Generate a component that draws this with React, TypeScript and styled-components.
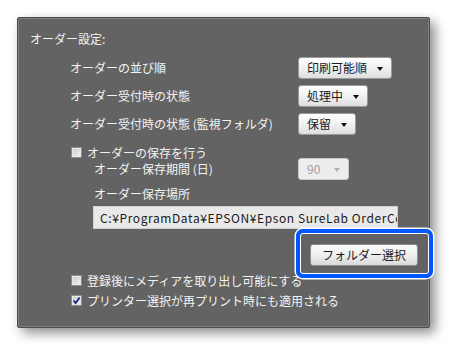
import { FC, PropsWithChildren } from 'react';
import styled, { createGlobalStyle } from 'styled-components';

const GlobalStyle = createGlobalStyle`
  html, body {
    margin: 0;
    padding: 0;
    background: #ffffff;
  }
  body {
    font-family: 'Noto Sans CJK JP', 'Noto Sans', sans-serif;
    font-size: 12px;
  }
`;

const Page = styled.div`
  padding: 17px 0 0 17px;
  width: 455px;
  height: 352px;
  box-sizing: border-box;
`;

const Panel = styled.div`
  position: relative;
  width: 413px;
  height: 311px;
  box-sizing: border-box;
  background: #636363;
  border: 1px solid #4c4c4c;
  border-radius: 2px;
  box-shadow: inset 0 0 0 1px #808080, 5px 5px 12px rgba(0, 0, 0, 0.45);
  padding: 12px 0 0 12px;
  color: #f4f4f4;
  display: flex;
  flex-direction: column;
`;

const Title = styled.div`
  height: 18px;
  line-height: 18px;
  margin-bottom: 9px;
`;

const Rows = styled.div`
  display: grid;
  grid-template-columns: 228px auto;
  row-gap: 6px;
  padding-left: 40px;
`;

const Label = styled.div`
  height: 22px;
  line-height: 22px;
  white-space: nowrap;
`;

const Select = styled.div<{ $width: number; $disabled?: boolean }>`
  width: ${(p) => p.$width}px;
  height: 22px;
  box-sizing: border-box;
  display: flex;
  align-items: center;
  justify-content: space-between;
  padding: 0 8px;
  border: 1px solid ${(p) => (p.$disabled ? '#c8c8c8' : '#9a9a9a')};
  border-radius: 3px;
  background: ${(p) =>
    p.$disabled
      ? '#ededed'
      : 'linear-gradient(#ffffff 0%, #f2f2f2 50%, #dedede 100%)'};
  color: ${(p) => (p.$disabled ? '#a0a0a0' : '#1a1a1a')};
  line-height: 20px;
`;

const Arrow = styled.span<{ $disabled?: boolean }>`
  width: 0;
  height: 0;
  border-left: 3.5px solid transparent;
  border-right: 3.5px solid transparent;
  border-top: 4px solid ${(p) => (p.$disabled ? '#b0b0b0' : '#111')};
  margin-top: 1px;
`;

const CheckRow = styled.label<{ $top?: number }>`
  display: flex;
  align-items: center;
  gap: 5px;
  height: 18px;
  margin-top: ${(p) => p.$top ?? 0}px;
  padding-left: 41px;
  white-space: nowrap;
`;

const Box = styled.span`
  width: 11px;
  height: 11px;
  box-sizing: border-box;
  border: 1px solid #8e8e8e;
  background: linear-gradient(135deg, #c9c9c9, #f2f2f2);
  box-shadow: inset 0 0 0 1px #e8e8e8;
  display: flex;
  align-items: center;
  justify-content: center;
`;

const SubRow = styled.div<{ $top?: number }>`
  display: flex;
  align-items: center;
  padding-left: 64px;
  height: 22px;
  margin-top: ${(p) => p.$top ?? 0}px;
`;

const SubLabel = styled.div`
  width: 204px;
  line-height: 22px;
`;

const PathBox = styled.div`
  margin: 1px 0 0 63px;
  width: 305px;
  height: 23px;
  box-sizing: border-box;
  background: #e9e9e9;
  border: 1px solid #d0d0d0;
  color: #1a1a1a;
  line-height: 21px;
  padding-left: 6px;
  letter-spacing: 0.6px;
  white-space: nowrap;
  overflow: hidden;
`;

const ButtonRow = styled.div`
  display: flex;
  padding-left: 280px;
  margin-top: 15px;
`;

const Highlight = styled.div`
  position: relative;
  &::after {
    content: '';
    position: absolute;
    left: -14px;
    right: -15px;
    top: -15px;
    bottom: -12px;
    border: 4px solid #0057ff;
    border-radius: 7px;
    box-shadow: 0 0 0 1.5px #ffffff, inset 0 0 0 1px #ffffff;
    pointer-events: none;
  }
`;

const Button = styled.button`
  width: 108px;
  height: 22px;
  box-sizing: border-box;
  border: 1px solid #8c8c8c;
  border-radius: 3px;
  background: linear-gradient(#fbfbfb 0%, #efefef 50%, #d9d9d9 100%);
  color: #1a1a1a;
  font-family: inherit;
  font-size: 12px;
  padding: 0;
  line-height: 20px;
`;

const Check: FC<{ checked?: boolean }> = ({ checked }) => (
  <Box>
    {checked && (
      <svg width="9" height="9" viewBox="0 0 9 9">
        <path d="M1.5 4.5 L3.6 7 L7.6 1.6" fill="none" stroke="#23238c" strokeWidth="1.8" />
      </svg>
    )}
  </Box>
);

const Dropdown: FC<PropsWithChildren<{ width: number; disabled?: boolean }>> = ({
  width,
  disabled,
  children,
}) => (
  <Select $width={width} $disabled={disabled}>
    <span>{children}</span>
    <Arrow $disabled={disabled} />
  </Select>
);

export default function App() {
  return (
    <>
      <GlobalStyle />
      <Page>
        <Panel>
          <Title>オーダー設定:</Title>
          <Rows>
            <Label>オーダーの並び順</Label>
            <Dropdown width={94}>印刷可能順</Dropdown>
            <Label>オーダー受付時の状態</Label>
            <Dropdown width={70}>処理中</Dropdown>
            <Label>オーダー受付時の状態 (監視フォルダ)</Label>
            <Dropdown width={58}>保留</Dropdown>
          </Rows>
          <CheckRow $top={8}>
            <Check />
            オーダーの保存を行う
          </CheckRow>
          <SubRow $top={-3}>
            <SubLabel>オーダー保存期間 (日)</SubLabel>
            <Dropdown width={51} disabled>
              90
            </Dropdown>
          </SubRow>
          <SubRow $top={3}>
            <SubLabel>オーダー保存場所</SubLabel>
          </SubRow>
          <PathBox>C:¥ProgramData¥EPSON¥Epson SureLab OrderController</PathBox>
          <ButtonRow>
            <Highlight>
              <Button>フォルダー選択</Button>
            </Highlight>
          </ButtonRow>
          <CheckRow $top={5}>
            <Check />
            登録後にメディアを取り出し可能にする
          </CheckRow>
          <CheckRow $top={2}>
            <Check checked />
            プリンター選択が再プリント時にも適用される
          </CheckRow>
        </Panel>
      </Page>
    </>
  );
}
